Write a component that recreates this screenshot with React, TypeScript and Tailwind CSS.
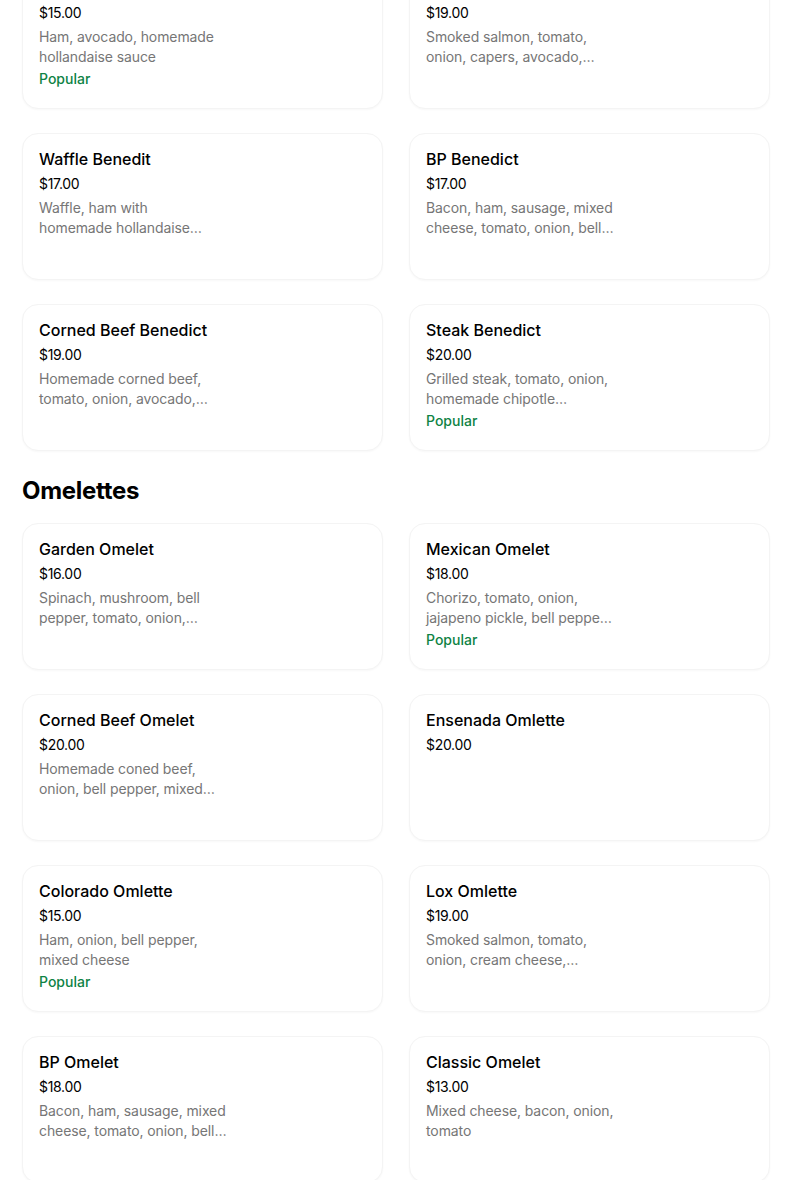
import React from 'react';

interface Item {
  name: string;
  price: string;
  lines: string[];
  popular?: boolean;
}

const benedicts: Item[] = [
  { name: 'Classic Benedict', price: '$15.00', lines: ['Ham, avocado, homemade', 'hollandaise sauce'], popular: true },
  { name: 'Lox Benedict', price: '$19.00', lines: ['Smoked salmon, tomato,', 'onion, capers, avocado,…'] },
  { name: 'Waffle Benedit', price: '$17.00', lines: ['Waffle, ham with', 'homemade hollandaise…'] },
  { name: 'BP Benedict', price: '$17.00', lines: ['Bacon, ham, sausage, mixed', 'cheese, tomato, onion, bell…'] },
  { name: 'Corned Beef Benedict', price: '$19.00', lines: ['Homemade corned beef,', 'tomato, onion, avocado,…'] },
  { name: 'Steak Benedict', price: '$20.00', lines: ['Grilled steak, tomato, onion,', 'homemade chipotle…'], popular: true },
];

const omelettes: Item[] = [
  { name: 'Garden Omelet', price: '$16.00', lines: ['Spinach, mushroom, bell', 'pepper, tomato, onion,…'] },
  { name: 'Mexican Omelet', price: '$18.00', lines: ['Chorizo, tomato, onion,', 'jajapeno pickle, bell peppe…'], popular: true },
  { name: 'Corned Beef Omelet', price: '$20.00', lines: ['Homemade coned beef,', 'onion, bell pepper, mixed…'] },
  { name: 'Ensenada Omlette', price: '$20.00', lines: [] },
  { name: 'Colorado Omlette', price: '$15.00', lines: ['Ham, onion, bell pepper,', 'mixed cheese'], popular: true },
  { name: 'Lox Omlette', price: '$19.00', lines: ['Smoked salmon, tomato,', 'onion, cream cheese,…'] },
  { name: 'BP Omelet', price: '$18.00', lines: ['Bacon, ham, sausage, mixed', 'cheese, tomato, onion, bell…'] },
  { name: 'Classic Omelet', price: '$13.00', lines: ['Mixed cheese, bacon, onion,', 'tomato'] },
];

const ItemCard: React.FC<{ item: Item }> = ({ item }) => (
  <div className="h-[147px] rounded-2xl border border-[#f4f4f4] bg-white px-4 pt-[15px] shadow-[0_1px_2px_rgba(0,0,0,0.03)]">
    <div className="text-[16px] font-medium leading-5 text-black">{item.name}</div>
    <div className="mt-[5px] text-[14px] leading-5 text-black tracking-[-0.3px]">{item.price}</div>
    {item.lines.length > 0 && (
      <div className="mt-1 text-[14px] leading-5 tracking-[-0.1px] text-[#767676]">
        {item.lines.map(l => (
          <div key={l} className="whitespace-nowrap">{l}</div>
        ))}
      </div>
    )}
    {item.popular && (
      <div className="mt-[2px] text-[14px] font-medium leading-5 text-[#0e8345]">Popular</div>
    )}
  </div>
);

export default function App() {
  return (
    <div className="min-h-[1180px] overflow-hidden bg-white" style={{ fontFamily: 'Inter, "Noto Sans", sans-serif' }}>
      <div className="mt-[-38px] ml-[22px] w-[748px]">
        <div className="grid grid-cols-2 gap-x-[26px] gap-y-6">
          {benedicts.map(i => <ItemCard key={i.name} item={i} />)}
        </div>
        <h2 className="mt-6 mb-4 text-[24px] font-bold leading-8 tracking-[-0.3px] text-black">Omelettes</h2>
        <div className="grid grid-cols-2 gap-x-[26px] gap-y-6">
          {omelettes.map(i => <ItemCard key={i.name} item={i} />)}
        </div>
      </div>
    </div>
  );
}
